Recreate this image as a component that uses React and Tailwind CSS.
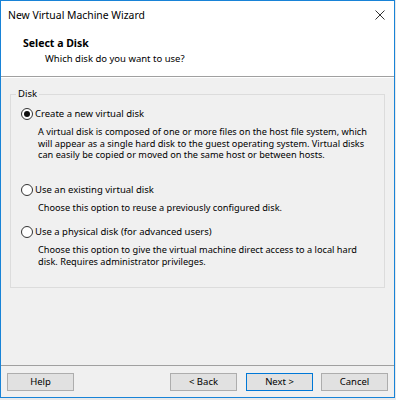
import React from "react";

const Radio = ({ checked }) => (
  <span className="w-[12px] h-[12px] rounded-full border border-[#333] bg-white flex items-center justify-center shrink-0">
    {checked && <span className="w-[6px] h-[6px] rounded-full bg-[#111]" />}
  </span>
);

const Option = ({ checked, label, lines, className = "" }) => (
  <div className={className}>
    <div className="flex items-center h-[14px] gap-[2px] pl-[10px]">
      <Radio checked={checked} />
      <span>{label}</span>
    </div>
    <div className="pl-[27px] mt-[5px] leading-[11.7px] text-[9.2px] whitespace-nowrap">
      {lines.map((l, i) => (
        <div key={i}>{l}</div>
      ))}
    </div>
  </div>
);

const Button = ({ children, primary }) => (
  <button
    className={
      "w-[67px] h-[18px] bg-[#e1e1e1] flex items-center justify-center border " +
      (primary ? "border-[#0078d7]" : "border-[#adadad]")
    }
  >
    {children}
  </button>
);

export default function App() {
  return (
    <div
      className="w-[396px] h-[400px] bg-[#e9e9e9] text-[9.5px] text-black"
      style={{ fontFamily: '"Noto Sans", "Open Sans", sans-serif' }}
    >
      <div className="w-[395px] h-[398px] border border-[#1883d7] bg-[#f0f0f0] flex flex-col">
        {/* title bar */}
        <div className="h-[29px] bg-white flex items-center justify-between pl-[7px] pr-[9px] shrink-0">
          <span className="text-[10.4px]">New Virtual Machine Wizard</span>
          <svg width="10" height="10" viewBox="0 0 10 10" className="mb-[1px]">
            <path d="M0.5 0.5 L9.5 9.5 M9.5 0.5 L0.5 9.5" stroke="#333" strokeWidth="1" fill="none" />
          </svg>
        </div>

        {/* header */}
        <div className="h-[47px] bg-white pl-[22px] pt-[6px] shrink-0 border-b border-[#a0a0a0]">
          <div className="font-bold text-[10.5px] leading-[14px]">Select a Disk</div>
          <div className="pl-[22px] leading-[14px] mt-[2px]">Which disk do you want to use?</div>
        </div>
        <div className="h-px bg-white shrink-0" />

        {/* body */}
        <div className="flex-1 px-[9px] pt-[10px]">
          <fieldset className="border border-[#dcdcdc] h-[200px] pt-[7px]">
            <legend className="ml-[5px] px-[2px] leading-[12px]">Disk</legend>
            <Option
              checked
              label="Create a new virtual disk"
              lines={[
                "A virtual disk is composed of one or more files on the host file system, which",
                "will appear as a single hard disk to the guest operating system. Virtual disks",
                "can easily be copied or moved on the same host or between hosts.",
              ]}
            />
            <Option
              label="Use an existing virtual disk"
              className="mt-[22px]"
              lines={["Choose this option to reuse a previously configured disk."]}
            />
            <Option
              label="Use a physical disk (for advanced users)"
              className="mt-[11px]"
              lines={[
                "Choose this option to give the virtual machine direct access to a local hard",
                "disk. Requires administrator privileges.",
              ]}
            />
          </fieldset>
        </div>

        {/* footer */}
        <div className="border-t border-[#a0a0a0] h-[32px] shrink-0 flex items-start pt-[7px] px-[6px]">
          <Button>Help</Button>
          <div className="flex-1" />
          <div className="flex gap-[9px]">
            <Button>&lt; Back</Button>
            <Button primary>Next &gt;</Button>
          </div>
          <div className="w-[8px]" />
          <Button>Cancel</Button>
        </div>
      </div>
    </div>
  );
}
